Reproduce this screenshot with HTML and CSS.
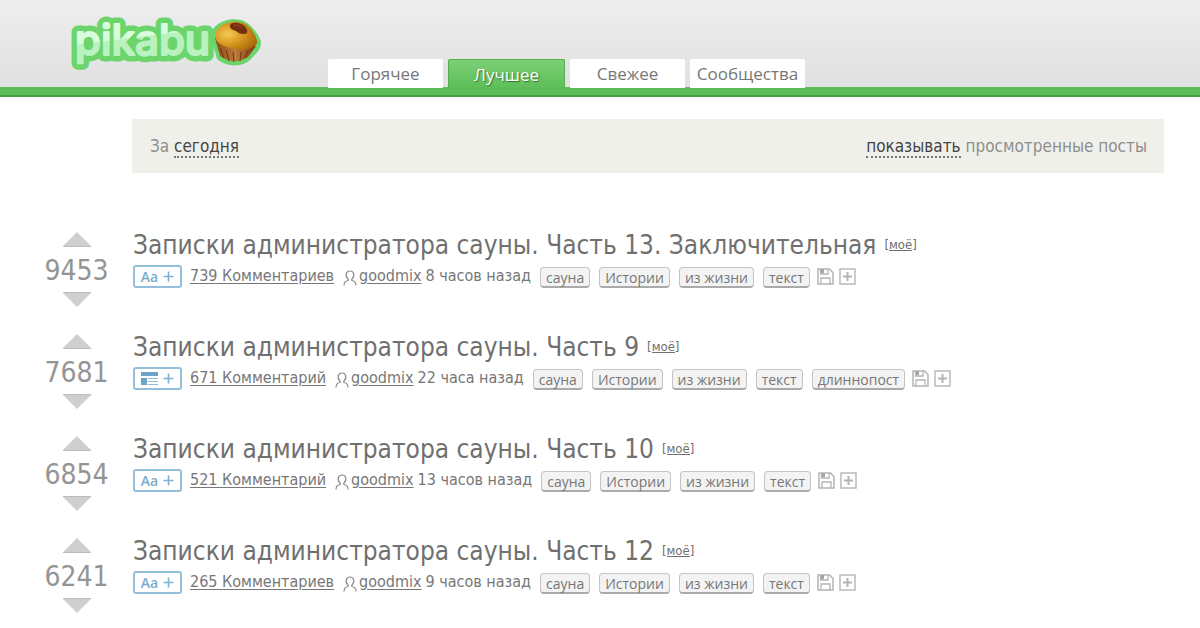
FILE: index.html
```html
<!DOCTYPE html>
<html lang="ru">
<head>
<meta charset="utf-8">
<meta name="viewport" content="width=device-width, initial-scale=1">
<title>Пикабу</title>
<link rel="stylesheet" href="styles.css">
</head>
<body>
<svg class="defs" width="0" height="0" aria-hidden="true">
  <symbol id="user" viewBox="0 0 14 16"><path d="M1 15.500C1 12 2 11 4.800 10.500C5.500 10.200 5.500 9.500 5 9C1.800 6 3 1 7 1S12.200 6 9 9C8.500 9.500 8.500 10.200 9.200 10.500C12 11 13 12 13 15.500" fill="none" stroke="#8c8c8c" stroke-width="1.200"/></symbol>
  <symbol id="save" viewBox="0 0 17 17"><path d="M1 1H12.500L16 4.500V16H1Z" fill="none" stroke="#b4b4b4" stroke-width="1.500"/><path d="M3.500 1V6H11V1M4 16V10H13V16" fill="none" stroke="#b4b4b4" stroke-width="1.300"/><path d="M4 1h3v4H4z" fill="#a4a4a4"/></symbol>
  <symbol id="plus" viewBox="0 0 17 17"><path d="M1 1H16V16H1Z" fill="none" stroke="#bababa" stroke-width="1.500"/><path d="M8.500 4V13M4 8.500H13" stroke="#b4b4b4" stroke-width="2"/></symbol>
  <symbol id="up" viewBox="0 0 28 15"><path d="M14 0L28 14V15H0V14Z" fill="#cfcfcf"/><path d="M0 14.500H28" stroke="#bdbdbd"/></symbol>
  <symbol id="down" viewBox="0 0 28 15"><path d="M0 0H28V1L14 15L0 1Z" fill="#cfcfcf"/><path d="M0 .5H28" stroke="#bdbdbd"/></symbol>
  <symbol id="small-plus" viewBox="0 0 11 11"><path d="M5.500 .5V10.500M.5 5.500H10.500" stroke="#7fb0d0" stroke-width="1.600"/></symbol>
  <symbol id="article" viewBox="0 0 17 13"><path d="M0 0H17V4H0ZM0 6H6V13H0Z" fill="#6ba3c8"/><path d="M7 6.500H17M7 9.500H17M7 12.500H17" stroke="#8dbad6"/></symbol>
</svg>
<header class="header">
  <a class="logo" href="#" aria-label="pikabu">
    <svg class="logo-art" viewBox="0 0 200 64">
      <defs>
        <linearGradient id="letters" gradientUnits="userSpaceOnUse" x1="0" y1="10" x2="6" y2="58"><stop offset=".52" stop-color="#d9fddc"/><stop offset=".55" stop-color="#b9f2be"/></linearGradient>
        <radialGradient id="cake" cx=".3" cy=".45" r=".75"><stop offset="0" stop-color="#f3cb55"/><stop offset=".45" stop-color="#d99a22"/><stop offset="1" stop-color="#a86408"/></radialGradient>
        <linearGradient id="cup"><stop offset="0" stop-color="#8a4d18"/><stop offset=".5" stop-color="#bd7b3c"/><stop offset="1" stop-color="#75380c"/></linearGradient>
      </defs>
      <text class="logo-edge" x="9" y="45">pikabu</text>
      <path d="M145 28C144 15 160 7 175 10C184 12 196 28 195 34C194 41 189 44 185 49C178 57 161 58 151 49Z" fill="#6bd56c"/>
      <text class="logo-text" x="9" y="45">pikabu</text>
      <path d="M149 28L154 46Q168 56 182 47L190 36Z" fill="url(#cup)"/>
      <path d="M154 38L158 48M160 40L163 51M167 42L168 52M175 42L174 51M182 41L179 48" stroke="#6d350d" stroke-width="1"/>
      <path d="M149 26C149 14 167 9 177 13C184 15 192 28 191 33C188 39 177 41 168 39C158 37 150 34 149 26Z" fill="url(#cake)"/>
      <path d="M164 16C164 12 171 12 175 14C180 16 182 20 181 23C178 25 173 24 170 21C167 20 164 19 164 16Z" fill="#74300e"/><path d="M167 15.500Q171 14 176 17" fill="none" stroke="#8c421d" stroke-width="1.500"/>
    </svg>
  </a>
  <nav class="tabs"><a class="tab" href="#">Горячее</a><a class="tab active" href="#" aria-current="page">Лучшее</a><a class="tab" href="#">Свежее</a><a class="tab" href="#">Сообщества</a></nav>
</header>
<main class="main">
  <div class="filter"><span>За <a href="#">сегодня</a></span><span><a href="#">показывать</a> просмотренные посты</span></div>
  <div class="feed" id="feed"></div>
</main>
<script src="feed.js"></script>
</body>
</html>
```
FILE: styles.css
```css
* { box-sizing: border-box; }
body { margin: 0; background: #fff; color: #777; font-family: "DejaVu Sans Condensed", sans-serif; }
.defs { position: absolute; }
a { color: inherit; }
button { font: inherit; color: inherit; margin: 0; padding: 0; border: 0; background: none; display: flex; }
.header { display: flex; align-items: flex-end; height: 97px; padding-left: 66px; background: linear-gradient(#eee, #dfdfdf); border-bottom: 2px solid #4a9c46; box-shadow: inset 0 -8px #5dbe58; }
.logo { align-self: flex-start; width: 262px; padding-top: 10px; }
.logo-art { display: block; width: 200px; height: 64px; }
.logo-edge, .logo-text { font: 500 42px Inter, sans-serif; stroke-linejoin: round; stroke-linecap: round; }
.logo-edge { fill: #6bd56c; stroke: #6bd56c; stroke-width: 13px; }
.logo-text { fill: url(#letters); stroke: url(#letters); stroke-width: 2px; }
.tabs { display: flex; gap: 5px; padding-bottom: 7px; }
.tab { width: 115px; height: 29px; line-height: 29px; text-align: center; font-size: 17px; font-family: "Open Sans", sans-serif; text-decoration: none; background: #fff; border-radius: 2px 2px 0 0; }
.active { width: 117px; color: #fff; background: linear-gradient(#7bd076, #5dbe58); border: 1px solid #55ae50; border-bottom: 0; text-shadow: 1px 1px 1px #36732f; }
.main { padding: 22px 36px 0 44px; }
.filter { display: flex; justify-content: space-between; align-items: center; height: 54px; margin-left: 88px; padding: 0 17px 0 18px; background: #f0f0ea; color: #8e8e8e; font-size: 17px; }
.filter a { color: #444; text-decoration: none; border-bottom: 2px dotted #777; }
.feed { padding-top: 55px; }
.post { display: flex; gap: 24px; height: 102px; }
.votes { display: flex; flex-direction: column; align-items: center; width: 65px; padding-top: 4px; }
.votes svg { display: block; width: 28px; height: 15px; }
.score { height: 45px; line-height: 48px; font-size: 28px; color: #949494; }
.title { margin: 0; height: 34px; line-height: 34px; font-size: 26px; font-weight: 400; white-space: nowrap; color: #707070; }
.title a { text-decoration: none; }
.title .mine { margin-left: 8px; font-size: 13px; vertical-align: 5px; line-height: 1; text-decoration: underline; }
.meta { display: flex; align-items: center; height: 28px; font-size: 16px; line-height: 18px; white-space: nowrap; }
.meta a { text-underline-offset: 2px; }
.preview { align-items: center; justify-content: center; gap: 5px; width: 49px; height: 23px; margin-right: 8px; border: 2px solid #94bfda; border-radius: 3px; color: #7aabcc; font: 600 14px "Open Sans", sans-serif; }
.preview svg { width: 11px; height: 11px; }
.preview .article { width: 17px; height: 13px; }
.user { width: 14px; height: 16px; margin: 4px 2px 0 9px; }
.time { margin: 0 9px 0 4px; }
.tags { display: flex; gap: 9px; margin-right: 7px; }
.tag { height: 21px; margin-top: 2px; padding: 0 5px; line-height: 20px; border: 1px solid #c4c4c4; border-bottom: 2px solid #aaa; border-radius: 4px; background: #f3f3f3; font-size: 14px; font-family: "Open Sans", sans-serif; text-decoration: none; }
.tool { margin-right: 5px; }
.tool svg { width: 17px; height: 17px; }
```
FILE: feed.js
```js
const posts = [
  [9453, "13. Заключительная", "739 Комментариев", "8 часов назад", false],
  [7681, "9", "671 Комментарий", "22 часа назад", true],
  [6854, "10", "521 Комментарий", "13 часов назад", false],
  [6241, "12", "265 Комментариев", "9 часов назад", false]
];
const icon = (id, cls = "") => `<svg class="${cls}" aria-hidden="true"><use href="#${id}"/></svg>`;
document.getElementById("feed").innerHTML = posts.map(([score, part, comments, time, long]) => {
  const tags = ["сауна", "Истории", "из жизни", "текст"].concat(long ? ["длиннопост"] : []);
  return `<article class="post">
    <div class="votes"><button aria-label="Плюс">${icon("up")}</button><span class="score">${score}</span><button aria-label="Минус">${icon("down")}</button></div>
    <div class="body">
      <h2 class="title"><a href="#">Записки администратора сауны. Часть ${part}</a><a class="mine" href="#">[моё]</a></h2>
      <div class="meta">
        <button class="preview" aria-label="Развернуть">${long ? icon("article", "article") : "<span>Aa</span>"}${icon("small-plus")}</button>
        <a href="#">${comments}</a>${icon("user", "user")}<a href="#">goodmix</a><span class="time">${time}</span>
        <div class="tags">${tags.map(t => `<a class="tag" href="#">${t}</a>`).join("")}</div>
        <button class="tool" aria-label="Сохранить">${icon("save")}</button><button class="tool" aria-label="Добавить">${icon("plus")}</button>
      </div>
    </div>
  </article>`;
}).join("");
```
